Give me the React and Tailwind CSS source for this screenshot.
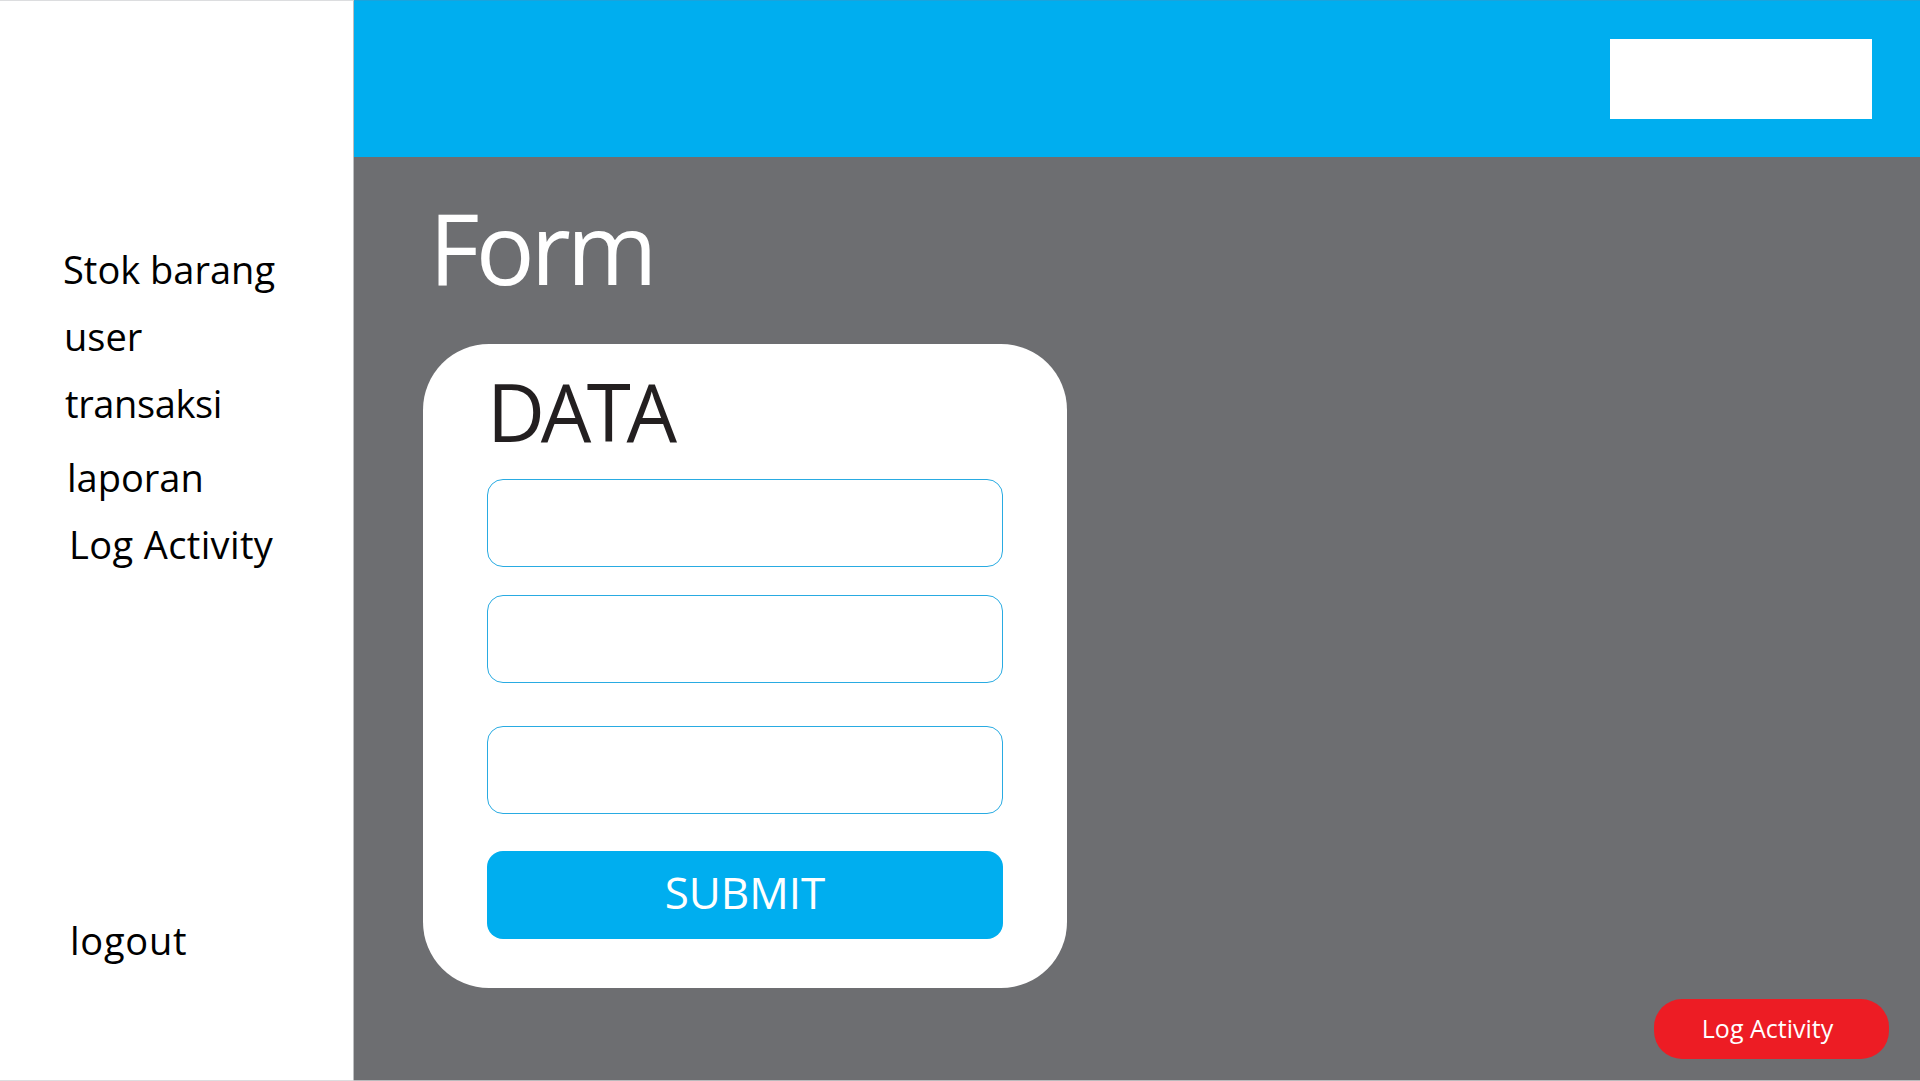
import React from 'react';

const menu = [
    { label: 'Stok barang', className: 'pl-[63px]' },
    { label: 'user', className: 'pl-[64px]' },
    { label: 'transaksi', className: 'pl-[65px] tracking-[-0.01em]' },
    { label: 'laporan', className: 'pl-[67px] mt-[7px]' },
    { label: 'Log Activity', className: 'pl-[69px] tracking-[0.01em]' }
];

const Field = ({ className = '' }) => (
    <div className={`h-[88px] w-full rounded-[16px] border-[1.5px] border-[#29abe2] bg-white ${className}`} />
);

const Sidebar = () => {
    return (
        <aside className="flex h-full w-[354px] shrink-0 flex-col border-t border-b border-r border-t-[#dcdddf] border-b-[#dcdddf] border-r-[#bcbec0] bg-white pt-[235px] pb-[106px] text-black">
            {menu.map((item) => (
                <a key={item.label} className={`block text-[38px] leading-[67px] ${item.className}`}>
                    {item.label}
                </a>
            ))}
            <a className="mt-auto block pl-[70px] text-[38px] leading-[67px] tracking-[0.02em]">logout</a>
        </aside>
    );
};

const FormCard = () => {
    return (
        <div className="flex h-[644px] w-[644px] flex-col rounded-[66px] bg-white px-[64px] pt-[27px] pb-[49px]">
            <h2 className="text-[80px] leading-none tracking-[-0.055em] text-[#231f20]">DATA</h2>
            <Field className="mt-[28px]" />
            <Field className="mt-[28px]" />
            <Field className="mt-[43px]" />
            <button className="mt-[37px] h-[88px] w-full rounded-[16px] bg-[#00aeef] pb-[6px] text-[44px] leading-none text-white">
                SUBMIT
            </button>
        </div>
    );
};

export default function App() {
    return (
        <div className="flex h-[1081px] w-[1920px] overflow-hidden bg-white font-['Open_Sans',sans-serif]">
            <Sidebar />

            <main className="flex flex-1 flex-col border-b border-[#b9babc] bg-[#6d6e71]">
                {/* Top bar */}
                <header className="flex h-[157px] shrink-0 items-center justify-end border-t border-[#1ba3dc] bg-[#00aeef] pr-[48px]">
                    <div className="h-[80px] w-[262px] bg-white" />
                </header>

                <div className="flex flex-col pl-[69px]">
                    <h1 className="mt-[41px] ml-[6px] text-[98px] leading-none tracking-[-0.04em] text-white">Form</h1>
                    <div className="mt-[48px]">
                        <FormCard />
                    </div>
                </div>

                <div className="mt-[11px] flex justify-end pr-[31px]">
                    <button className="h-[60px] w-[235px] rounded-[28px] bg-[#ed1c24] pr-[8px] text-[25px] text-white">
                        Log Activity
                    </button>
                </div>
            </main>
        </div>
    );
}
